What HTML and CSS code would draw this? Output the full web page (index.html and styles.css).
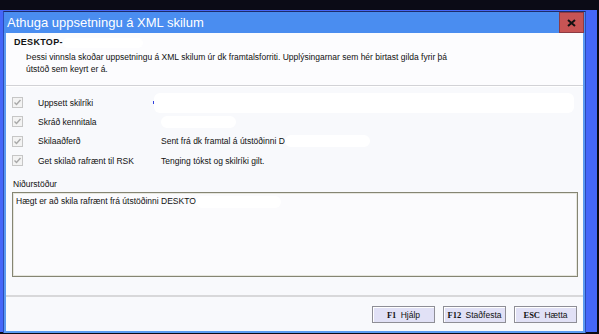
FILE: index.html
```html
<!DOCTYPE html>
<html lang="is">

<head>
	<meta charset="UTF-8">
	<title>Athuga uppsetningu á XML skilum</title>
	<link rel="stylesheet" href="styles.css">
</head>

<body>
	<div class="desk">
		<div class="window">
			<div class="titlebar">
				<span class="title">Athuga uppsetningu á XML skilum</span>
				<span class="close">
					<svg width="9" height="8" viewBox="0 0 9 8"><path d="M1 1 L8 7 M8 1 L1 7" stroke="#111" stroke-width="2"/></svg>
				</span>
			</div>
			<div class="client">
				<div class="header">
					<div class="machine">DESKTOP-<span class="blank blank-head"></span></div>
					<p class="intro">Þessi vinnsla skoðar uppsetningu á XML skilum úr dk framtalsforriti. Upplýsingarnar sem hér birtast gilda fyrir þá útstöð sem keyrt er á.</p>
				</div>

				<div class="checks">
					<div class="row">
						<span class="box"><svg width="11" height="11" viewBox="0 0 11 11"><path d="M2.5 5.5 L4.5 7.5 L8.5 3" fill="none" stroke="#a8a8a8" stroke-width="1.4"/></svg></span>
						<span class="label">Uppsett skilríki</span>
						<span class="value"><span class="dot"></span><span class="blank blank-wide"></span></span>
					</div>
					<div class="row">
						<span class="box"><svg width="11" height="11" viewBox="0 0 11 11"><path d="M2.5 5.5 L4.5 7.5 L8.5 3" fill="none" stroke="#a8a8a8" stroke-width="1.4"/></svg></span>
						<span class="label">Skráð kennitala</span>
						<span class="value"><span class="blank blank-short"></span></span>
					</div>
					<div class="row">
						<span class="box"><svg width="11" height="11" viewBox="0 0 11 11"><path d="M2.5 5.5 L4.5 7.5 L8.5 3" fill="none" stroke="#a8a8a8" stroke-width="1.4"/></svg></span>
						<span class="label">Skilaaðferð</span>
						<span class="value">Sent frá dk framtal á útstöðinni D<span class="blank blank-mid"></span></span>
					</div>
					<div class="row">
						<span class="box"><svg width="11" height="11" viewBox="0 0 11 11"><path d="M2.5 5.5 L4.5 7.5 L8.5 3" fill="none" stroke="#a8a8a8" stroke-width="1.4"/></svg></span>
						<span class="label">Get skilað rafrænt til RSK</span>
						<span class="value">Tenging tókst og skilríki gilt.</span>
					</div>
				</div>

				<div class="result-label">Niðurstöður</div>
				<div class="result">Hægt er að skila rafrænt frá útstöðinni DESKTO<span class="blank blank-mid"></span></div>

				<div class="footer">
					<button class="btn"><b>F1</b> Hjálp</button>
					<button class="btn"><b>F12</b> Staðfesta</button>
					<button class="btn"><b>ESC</b> Hætta</button>
				</div>
			</div>
		</div>
	</div>
</body>

</html>
```

FILE: styles.css
```css
body {
    margin: 0;
    background-color: #0b0b16;
    font-family: "Liberation Sans", Arial, sans-serif;
    font-size: 8.5px;
    color: #111;
    padding-top: 10px;
    height: 324px;
}
.desk {
    background-color: #4567f9;
    margin-right: 2px;
    height: 322px;
    padding: 1px 11px 0 3px;
    box-sizing: border-box;
}
.window {
    height: 321px;
    border: 1px solid #2b4bb8;
    border-top-color: #1c2c6a;
    border-bottom: none;
    background-color: #4a8df0;
    display: flex;
    flex-direction: column;
}
.titlebar {
    height: 21px;
    display: flex;
    align-items: center;
    justify-content: space-between;
    padding-left: 3px;
}
.title {
    color: white;
    font-size: 13px;
}
.close {
    width: 25px;
    height: 21px;
    background-color: #c75454;
    border: 1px solid #8d3a44;
    box-sizing: border-box;
    display: flex;
    align-items: center;
    justify-content: center;
    margin-right: 1px;
}
.client {
    flex: 1;
    background-color: #f8f9fc;
    border: 2px solid #5b9bf1;
    border-top: none;
    display: flex;
    flex-direction: column;
}
.header {
    background-color: #fcfcfe;
    height: 53px;
    padding: 4px 8px 0;
    box-sizing: border-box;
    border-bottom: 1px solid #d2d2d6;
    box-shadow: 0 1px 0 #fff;
}
.machine {
    font-weight: bold;
    font-size: 9px;
    letter-spacing: 0.3px;
}
.intro {
    margin: 3px 0 0 12px;
    line-height: 12px;
    width: 432px;
}
.blank {
    display: inline-block;
    background-color: #fff;
    border-radius: 6px;
    vertical-align: middle;
}
.blank-head { width: 80px; height: 10px; }
.blank-wide { width: 420px; height: 20px; }
.blank-short { width: 75px; height: 12px; }
.blank-mid { width: 85px; height: 12px; }
.checks {
    margin-top: 7px;
    padding-left: 6px;
}
.row {
    height: 19.3px;
    display: flex;
    align-items: center;
}
.box {
    width: 11px;
    height: 11px;
    border: 1px solid #c6c6c6;
    background-color: #f3f3f3;
    box-sizing: border-box;
    display: flex;
    align-items: center;
    justify-content: center;
    margin-right: 15px;
}
.box svg {
    flex: none;
}
.label {
    width: 123px;
}
.value {
    display: flex;
    align-items: center;
    white-space: nowrap;
}
.dot {
    width: 1px;
    height: 3px;
    background-color: #3040e0;
    margin-left: -8px;
}
.result-label {
    margin: 9px 0 0 7px;
    height: 11px;
}
.result {
    margin: 2px 5px 0 6px;
    height: 85px;
    box-sizing: border-box;
    border: 1px solid #858573;
    box-shadow: inset 0 0 0 1px #e6e6de;
    background-color: #fbfbfd;
    padding: 3px 3px;
}
.footer {
    margin-top: 18px;
    border-top: 2px solid #d8d8da;
    flex: 1;
    display: flex;
    justify-content: flex-end;
    align-items: flex-start;
    gap: 8px;
    padding: 9px 6px 0 0;
}
.btn {
    width: 63px;
    height: 17px;
    background-color: #e1e1f6;
    border: 1px solid #8e8e96;
    box-shadow: inset 1px 1px 0 #fff;
    font-family: "Liberation Sans", Arial, sans-serif;
    font-size: 8.5px;
    color: #111;
    padding: 0;
    text-align: center;
    white-space: nowrap;
}
.btn b {
    font-family: "Liberation Serif", "Times New Roman", serif;
    margin-right: 2px;
}
```
